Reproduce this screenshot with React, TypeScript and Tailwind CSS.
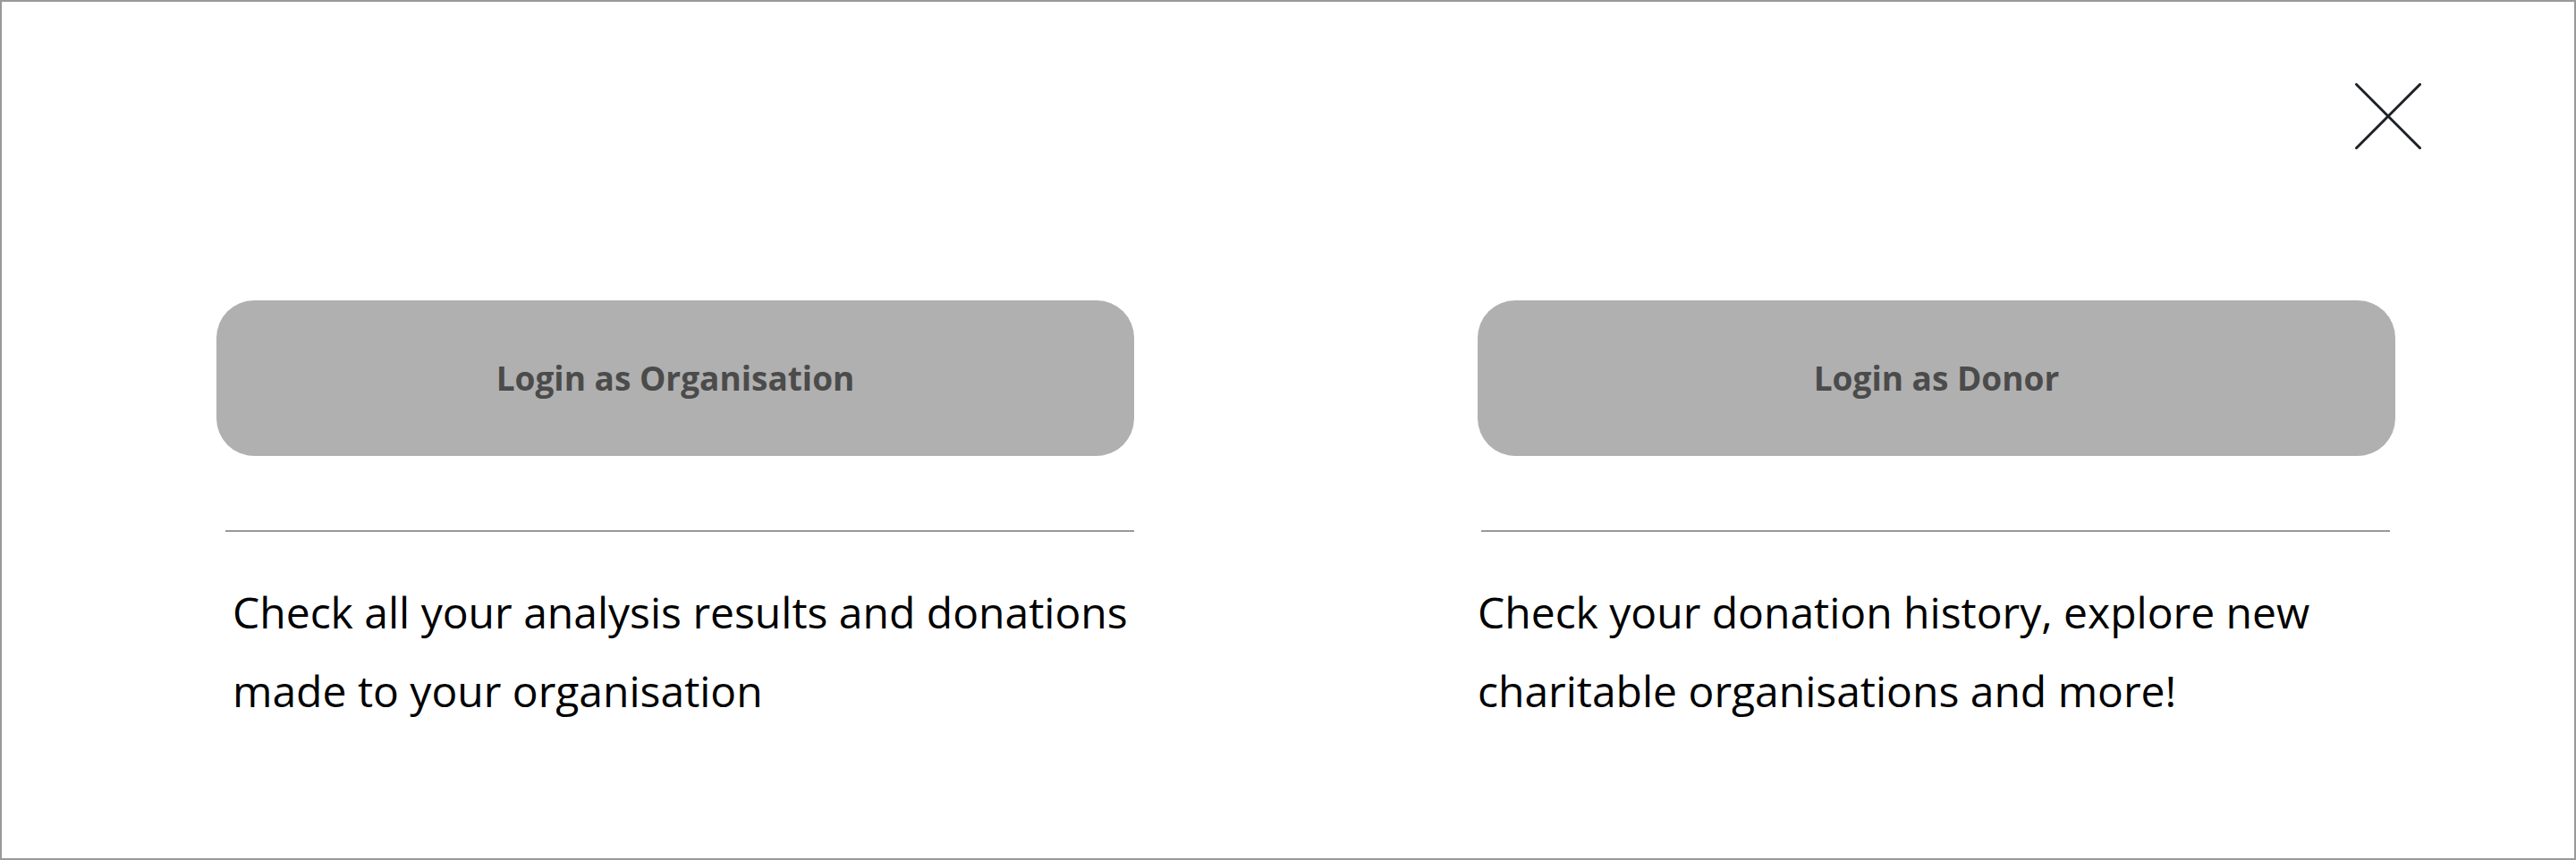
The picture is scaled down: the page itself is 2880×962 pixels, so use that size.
const options = [
  {
    label: "Login as Organisation",
    lines: ["Check all your analysis results and donations", "made to your organisation"],
    lineClass: "ml-[10px]",
    textClass: "ml-[18px]",
  },
  {
    label: "Login as Donor",
    lines: ["Check your donation history, explore new", "charitable organisations and more!"],
    lineClass: "ml-[4px]",
    textClass: "ml-0",
  },
];

function CloseIcon() {
  return (
    <svg className="block" width="74" height="74" viewBox="0 0 74 74" fill="none" stroke="#1d2127" strokeWidth="3" strokeLinecap="square">
      <path d="M1.5 1.5 72.5 72.5" />
      <path d="M72.5 1.5 1.5 72.5" />
    </svg>
  );
}

export default function App() {
  return (
    <div className="h-[962px] w-full box-border border-2 border-[#999999] bg-white font-['Open_Sans',sans-serif]">
      <div className="flex justify-end pt-[91px] pr-[171px]">
        <button className="block">
          <CloseIcon />
        </button>
      </div>

      <div className="mt-[169px] flex pl-[240px] gap-[384px]">
        {options.map((opt) => (
          <div key={opt.label} className="w-[1026px]">
            <button className="block h-[174px] w-[1026px] rounded-[42px] bg-[#b0b0b0] text-[37px] font-bold text-[#4b4b4b]">
              {opt.label}
            </button>
            <div className={`mt-[83px] h-[2px] w-[1016px] bg-[#999999] ${opt.lineClass}`} />
            <p className={`mt-[46px] text-[48px] leading-[88px] text-black ${opt.textClass}`}>
              {opt.lines[0]}
              <br />
              {opt.lines[1]}
            </p>
          </div>
        ))}
      </div>
    </div>
  );
}
